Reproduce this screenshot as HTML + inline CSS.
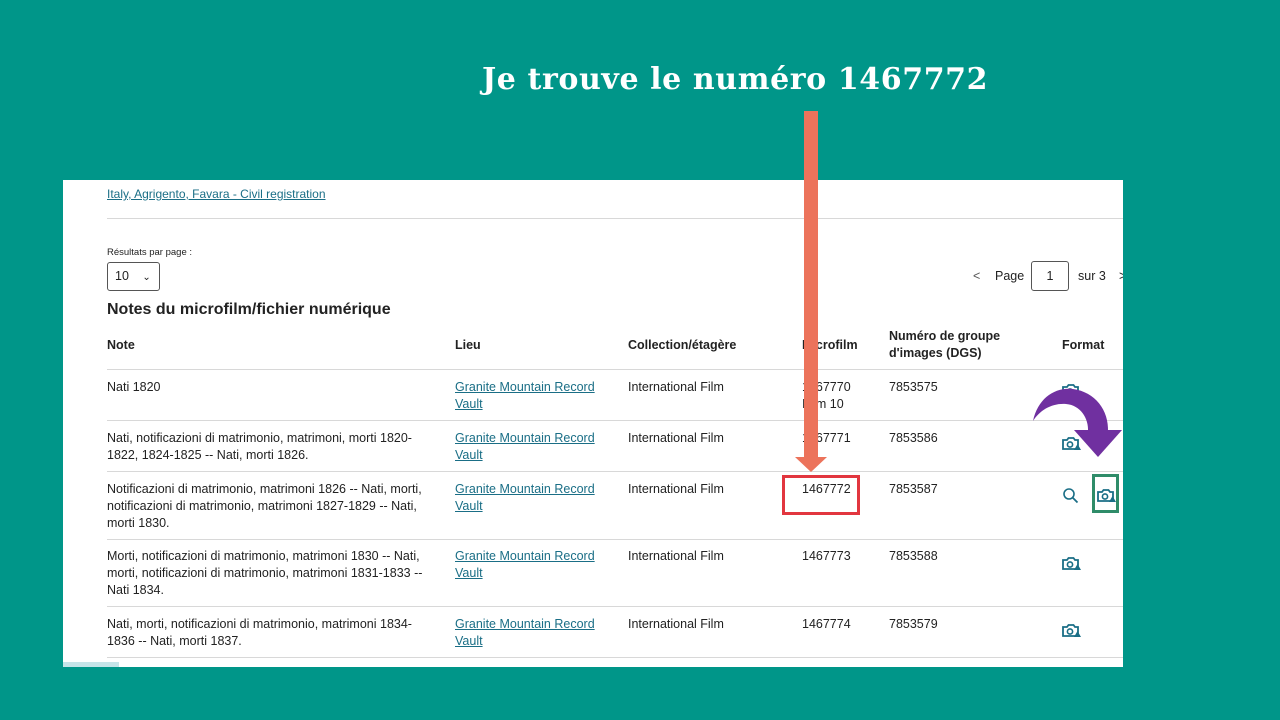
<!DOCTYPE html>
<html><head><meta charset="utf-8"><style>
*{margin:0;padding:0;box-sizing:border-box}
body{width:1280px;height:720px;background:#009689;position:relative;overflow:hidden;font-family:"Liberation Sans",sans-serif;color:#222}
.title{position:absolute;left:482px;top:62px;width:530px;font-family:"DejaVu Serif",serif;font-weight:bold;font-size:30px;color:#fff;white-space:nowrap;letter-spacing:0.6px}
.panel{position:absolute;left:63px;top:180px;width:1060px;height:487px;background:#fff;overflow:hidden}
.a{position:absolute;font-size:12.5px;line-height:17px;white-space:nowrap}
.lnk{color:#1a6e86;text-decoration:underline}
.b{font-weight:bold}
.hr{position:absolute;left:44px;width:1016px;height:1px;background:#d8d8d8}
</style></head><body>
<div class="title">Je trouve le numéro 1467772</div>
<div class="panel">
<div class="a lnk" style="left:44px;top:6px;font-size:12px">Italy, Agrigento, Favara - Civil registration</div>
<div class="hr" style="top:38px"></div>
<div class="a" style="left:44px;top:64px;font-size:9.5px">Résultats par page :</div>
<div style="position:absolute;left:44px;top:82px;width:53px;height:29px;border:1px solid #555;border-radius:3px;font-size:12.5px;padding:6px 0 0 7px">10 <span style="margin-left:10px;font-size:10px">&#8964;</span></div>
<div class="a" style="left:910px;top:88px;color:#555">&lt;</div>
<div class="a" style="left:932px;top:88px">Page</div>
<div style="position:absolute;left:968px;top:81px;width:38px;height:30px;border:1px solid #555;border-radius:3px;font-size:12.5px;text-align:center;padding-top:7px">1</div>
<div class="a" style="left:1015px;top:88px">sur 3</div>
<div class="a" style="left:1056px;top:88px">&gt;</div>
<div class="a b" style="left:44px;top:120px;font-size:16px;line-height:20px">Notes du microfilm/fichier numérique</div>
<div class="a b" style="left:44px;top:157px">Note</div>
<div class="a b" style="left:392px;top:157px">Lieu</div>
<div class="a b" style="left:565px;top:157px">Collection/étagère</div>
<div class="a b" style="left:739px;top:157px">Microfilm</div>
<div class="a b" style="left:826px;top:148px">Numéro de groupe<br>d'images (DGS)</div>
<div class="a b" style="left:999px;top:157px">Format</div>
<div class="hr" style="top:189px"></div>
<div class="hr" style="top:240px"></div>
<div class="hr" style="top:291px"></div>
<div class="hr" style="top:359px"></div>
<div class="hr" style="top:426px"></div>
<div class="hr" style="top:477px"></div>

<div class="a" style="left:44px;top:199px">Nati 1820</div>
<div class="a" style="left:44px;top:250px">Nati, notificazioni di matrimonio, matrimoni, morti 1820-<br>1822, 1824-1825 -- Nati, morti 1826.</div>
<div class="a" style="left:44px;top:301px">Notificazioni di matrimonio, matrimoni 1826 -- Nati, morti,<br>notificazioni di matrimonio, matrimoni 1827-1829 -- Nati,<br>morti 1830.</div>
<div class="a" style="left:44px;top:368px">Morti, notificazioni di matrimonio, matrimoni 1830 -- Nati,<br>morti, notificazioni di matrimonio, matrimoni 1831-1833 --<br>Nati 1834.</div>
<div class="a" style="left:44px;top:436px">Nati, morti, notificazioni di matrimonio, matrimoni 1834-<br>1836 -- Nati, morti 1837.</div>

<div class="a lnk" style="left:392px;top:199px">Granite Mountain Record<br>Vault</div>
<div class="a lnk" style="left:392px;top:250px">Granite Mountain Record<br>Vault</div>
<div class="a lnk" style="left:392px;top:301px">Granite Mountain Record<br>Vault</div>
<div class="a lnk" style="left:392px;top:368px">Granite Mountain Record<br>Vault</div>
<div class="a lnk" style="left:392px;top:436px">Granite Mountain Record<br>Vault</div>

<div class="a" style="left:565px;top:199px">International Film</div>
<div class="a" style="left:565px;top:250px">International Film</div>
<div class="a" style="left:565px;top:301px">International Film</div>
<div class="a" style="left:565px;top:368px">International Film</div>
<div class="a" style="left:565px;top:436px">International Film</div>

<div class="a" style="left:739px;top:199px">1467770<br>Item 10</div>
<div class="a" style="left:739px;top:250px">1467771</div>
<div class="a" style="left:739px;top:301px">1467772</div>
<div class="a" style="left:739px;top:368px">1467773</div>
<div class="a" style="left:739px;top:436px">1467774</div>

<div class="a" style="left:826px;top:199px">7853575</div>
<div class="a" style="left:826px;top:250px">7853586</div>
<div class="a" style="left:826px;top:301px">7853587</div>
<div class="a" style="left:826px;top:368px">7853588</div>
<div class="a" style="left:826px;top:436px">7853579</div>
<div style="position:absolute;left:0;top:482px;width:56px;height:6px;background:#c5e4e8"></div>
</div>

<svg width="1280" height="720" style="position:absolute;left:0;top:0">
<defs><g id="cam"><path d="M1 4h4l1.5-2h5l1.5 2h3v9h-15z" fill="none" stroke="#1a6e86" stroke-width="1.8"/><circle cx="8" cy="8.5" r="2.6" fill="none" stroke="#1a6e86" stroke-width="1.6"/><path d="M12 14l3.5-6 3.5 6z" fill="#1a6e86"/></g></defs>
<use href="#cam" x="1062" y="383"/>
<use href="#cam" x="1062" y="436"/>
<use href="#cam" x="1062" y="556"/>
<use href="#cam" x="1062" y="623"/>
<use href="#cam" x="1097" y="488"/>
<circle cx="1069" cy="494" r="5" fill="none" stroke="#1a6e86" stroke-width="1.6"/><path d="M1073 498l4.5 4.5" stroke="#1a6e86" stroke-width="1.8"/>
<rect x="804" y="111" width="14" height="348" fill="#ec735b"/>
<path d="M795 457h32l-16 15z" fill="#ec735b"/>
<rect x="783.5" y="476.5" width="75" height="37" fill="none" stroke="#e2363f" stroke-width="3"/>
<rect x="1093.5" y="475.5" width="24" height="36" fill="none" stroke="#2f8c69" stroke-width="3"/>
<path d="M1033 421C1038 398 1055 387 1073 389C1095 392 1109 410 1108 432L1088 432C1089 418 1080 405 1066 404C1052 403 1040 410 1033 421z" fill="#7030a0"/>
<path d="M1074 430h48l-24 27z" fill="#7030a0"/>
</svg>
</body></html>
